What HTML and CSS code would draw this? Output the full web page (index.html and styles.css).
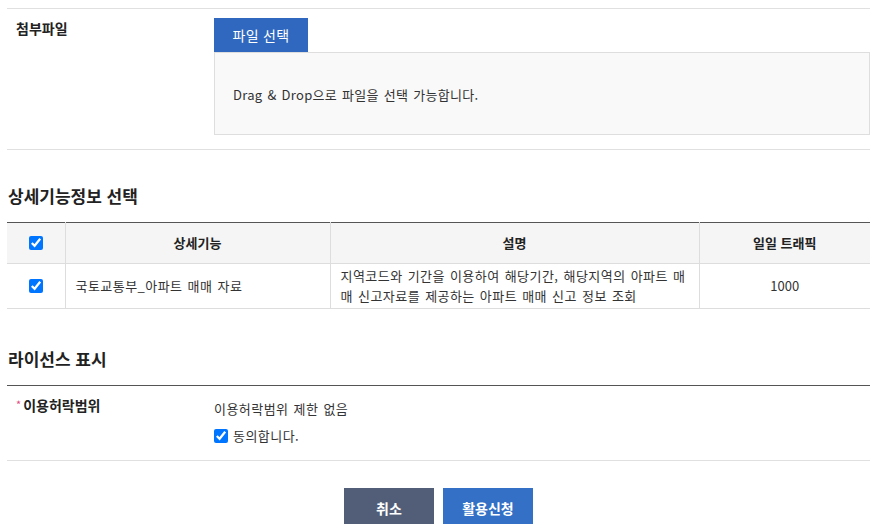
FILE: index.html
```html
<!DOCTYPE html>
<html lang="ko">
<head>
<meta charset="utf-8">
<title>활용신청</title>
<link rel="stylesheet" href="styles.css">
</head>
<body>
<div class="wrap">
  <div class="form-row file-row">
    <div class="label">첨부파일</div>
    <div class="field">
      <button class="btn-file" type="button">파일 선택</button>
      <div class="dropzone">Drag &amp; Drop으로 파일을 선택 가능합니다.</div>
    </div>
  </div>

  <h2 class="sec-title first">상세기능정보 선택</h2>
  <table class="grid">
    <colgroup>
      <col class="c1"><col class="c2"><col class="c3"><col class="c4">
    </colgroup>
    <thead>
      <tr>
        <th><input type="checkbox" class="chk" checked></th>
        <th>상세기능</th>
        <th>설명</th>
        <th>일일 트래픽</th>
      </tr>
    </thead>
    <tbody>
      <tr>
        <td class="center"><input type="checkbox" class="chk" checked></td>
        <td class="txt">국토교통부_아파트 매매 자료</td>
        <td class="desc txt">지역코드와 기간을 이용하여 해당기간, 해당지역의 아파트 매매 신고자료를 제공하는 아파트 매매 신고 정보 조회</td>
        <td class="center">1000</td>
      </tr>
    </tbody>
  </table>

  <h2 class="sec-title second">라이선스 표시</h2>
  <div class="form-row license-row">
    <div class="label"><span class="req">*</span>이용허락범위</div>
    <div class="field license">
      <p class="lic-text txt">이용허락범위 제한 없음</p>
      <label class="agree txt"><input type="checkbox" class="chk" checked><span>동의합니다.</span></label>
    </div>
  </div>

  <div class="actions">
    <button class="btn btn-cancel" type="button">취소</button>
    <button class="btn btn-apply" type="button">활용신청</button>
  </div>
</div>
</body>
</html>
```

FILE: styles.css
```css
* { box-sizing: border-box; }
html, body { margin: 0; padding: 0; background: #fff; }
body {
  font-family: "Noto Sans CJK KR", "Noto Sans", sans-serif;
  color: #333;
  font-size: 13px;
  line-height: 20px;
}
.wrap { padding: 8px 3px 0 7px; }

.txt { letter-spacing: 0.45px; word-spacing: 1px; }

.form-row {
  display: flex;
  border-bottom: 1px solid #e0e0e0;
}
.file-row {
  border-top: 1px solid #e0e0e0;
  padding: 9px 0 14px;
}
.label {
  width: 207px;
  flex: none;
  padding-left: 9px;
  font-size: 14px;
  line-height: 20px;
  font-weight: 700;
  color: #222;
}
.field { flex: 1; min-width: 0; }

.btn-file {
  display: block;
  width: 94px;
  height: 34px;
  border: 0;
  margin: 0;
  background: #2f68be;
  color: #fff;
  font-family: inherit;
  font-size: 14px;
  letter-spacing: 0.3px;
  padding: 0;
}
.dropzone {
  height: 83px;
  border: 1px solid #dedede;
  background: #f9f9f9;
  padding: 32px 18px 0;
  font-size: 13px;
  letter-spacing: 0.3px;
  word-spacing: 1px;
  color: #333;
}

.sec-title {
  margin: 0;
  font-size: 17px;
  line-height: 24px;
  font-weight: 700;
  color: #222;
  padding-left: 1px;
}
.sec-title.first { margin: 34px 0 14px; }
.sec-title.second { margin: 38px 0 14px; }

.grid {
  width: 100%;
  border-collapse: collapse;
  table-layout: fixed;
  border-top: 1px solid #555;
}
.grid col.c1 { width: 58px; }
.grid col.c2 { width: 265px; }
.grid col.c3 { width: 369px; }
.grid col.c4 { width: 171px; }
.grid th {
  height: 41px;
  background: #f5f5f5;
  font-size: 13px;
  font-weight: 700;
  color: #222;
  border-bottom: 1px solid #ddd;
  border-left: 1px solid #ddd;
  text-align: center;
  padding: 0;
}
.grid td {
  height: 45px;
  border-bottom: 1px solid #ddd;
  border-left: 1px solid #ddd;
  padding: 2px 10px;
  font-size: 13px;
  color: #333;
  vertical-align: middle;
}
.grid th:first-child, .grid td:first-child { border-left: 0; }
.grid td.center { text-align: center; padding: 0; }
.grid td.desc { line-height: 20px; padding: 1px 8px 1px 10px; }

.chk {
  width: 14px;
  height: 14px;
  margin: 0;
  vertical-align: middle;
  accent-color: #0075ff;
}
.grid th .chk, .grid td .chk { display: block; margin: 0 auto; }

.license-row {
  border-top: 1px solid #555;
  padding: 0 0 14px;
}
.license-row .label { padding-top: 9px; }
.req {
  color: #e5487d;
  font-size: 11px;
  font-weight: 400;
  margin-right: 2px;
  position: relative;
  top: -2px;
}
.license { padding-top: 13px; }
.lic-text { margin: 0 0 7px; font-size: 13px; color: #333; }
.agree { display: flex; align-items: center; gap: 5px; font-size: 13px; }

.actions {
  display: flex;
  justify-content: center;
  gap: 9px;
  margin-top: 27px;
}
.btn {
  width: 90px;
  height: 40px;
  border: 0;
  color: #fff;
  font-family: inherit;
  font-size: 14px;
  font-weight: 700;
  padding: 0;
}
.btn-cancel { background: #525e78; }
.btn-apply { background: #3370c6; }
```
